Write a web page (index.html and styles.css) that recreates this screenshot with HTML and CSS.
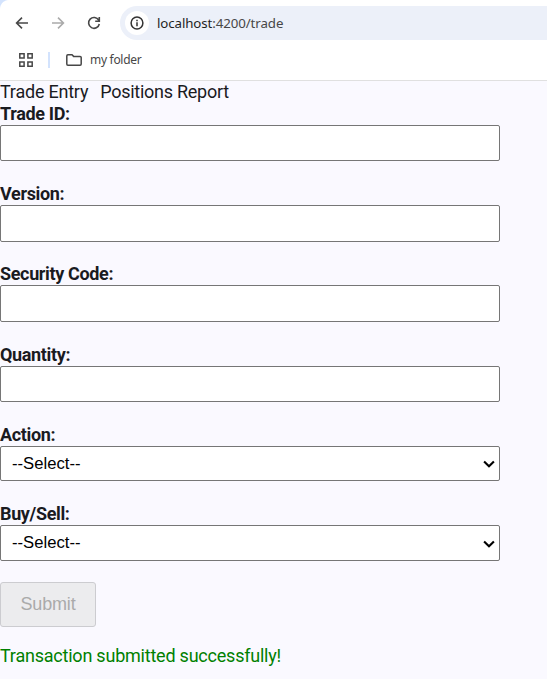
FILE: index.html
```html
<!DOCTYPE html>
<html lang="en">
<head>
<meta charset="utf-8">
<title>Trade Entry</title>
<link rel="stylesheet" href="styles.css">
</head>
<body>
<header class="browser">
  <div class="toolbar">
    <svg class="nav-icon" width="16" height="16" viewBox="0 0 16 16"><path d="M14 8H3M8 2.6L2.6 8L8 13.4"/></svg>
    <svg class="nav-icon muted" width="16" height="16" viewBox="0 0 16 16"><path d="M2 8h11M8 2.6L13.4 8L8 13.4"/></svg>
    <svg class="nav-icon" width="16" height="16" viewBox="0 0 16 16"><path d="M12.7 5.2A5.4 5.4 0 1 0 13.3 9M13.3 2v4.2H9.2"/></svg>
    <div class="address">
      <span class="info">
        <svg width="14" height="14" viewBox="0 0 14 14"><circle cx="7" cy="7" r="5.9"/><path d="M7 6.2v4M7 3.7v1.5"/></svg>
      </span>
      <span class="url"><b>localhost</b>:4200/trade</span>
    </div>
  </div>
  <div class="bookmarks">
    <svg class="apps" width="14" height="14" viewBox="0 0 14 14"><path d="M.8.8h4.3v4.3H.8zM8.9.8h4.3v4.3H8.9zM.8 8.9h4.3v4.3H.8zM8.9 8.9h4.3v4.3H8.9z"/></svg>
    <span class="divider"></span>
    <svg class="folder" width="16" height="12" viewBox="0 0 16 12"><path d="M.8 10.1V1.9Q.8.8 1.9.8H6l1.6 1.6h6.5q1.1 0 1.1 1.1v6.6q0 1.1-1.1 1.1H1.9Q.8 11.2.8 10.1z"/></svg>
    <span class="folder-name">my folder</span>
  </div>
</header>
<nav class="links"><a>Trade Entry</a><a>Positions Report</a></nav>
<form class="form">
  <div class="field"><label for="id"><span>Trade ID:</span></label><input id="id"></div>
  <div class="field tall"><label for="version"><span>Version:</span></label><input id="version"></div>
  <div class="field tall"><label for="code"><span>Security Code:</span></label><input id="code"></div>
  <div class="field"><label for="qty"><span>Quantity:</span></label><input id="qty"></div>
  <div class="field short"><label for="action"><span>Action:</span></label>
    <div class="picker"><select id="action"><option>--Select--</option></select><svg class="chevron" width="12" height="8" viewBox="0 0 12 8"><path d="M1.1 1.4L6 6.2L10.9 1.4"/></svg></div>
  </div>
  <div class="field side"><label for="side"><span>Buy/Sell:</span></label>
    <div class="picker"><select id="side"><option>--Select--</option></select><svg class="chevron" width="12" height="8" viewBox="0 0 12 8"><path d="M1.1 1.4L6 6.2L10.9 1.4"/></svg></div>
  </div>
  <button class="submit" disabled>Submit</button>
</form>
<p class="message">Transaction submitted successfully!</p>
</body>
</html>
```
FILE: styles.css
```css
* { box-sizing: border-box; }
body {
  margin: 0;
  height: 679px;
  overflow: hidden;
  background: #faf9ff;
  color: #1a1b1f;
  font: 18px/22px Roboto, sans-serif;
  letter-spacing: -.22px;
}
svg { display: block; fill: none; stroke: #474747; flex: none; }
.browser {
  height: 81px;
  padding-top: 6px;
  border-bottom: 1px solid #e0e0e0;
  background: radial-gradient(circle at 9px 9px, #fff 8.5px, #d3e3fd 9.5px) 0 0 / 9px 9px no-repeat, #fff;
  font-family: "Noto Sans", sans-serif;
}
.toolbar { display: flex; align-items: center; height: 34px; padding-left: 14px; }
.nav-icon { margin-right: 20px; stroke-width: 1.6; }
.nav-icon.muted { stroke: #aaa; }
.address {
  display: flex;
  align-items: center;
  flex: 1;
  height: 34px;
  margin-left: -2px;
  padding-left: 5px;
  border-radius: 17px 0 0 17px;
  background: #ecf0f9;
}
.info { display: grid; place-items: center; width: 24px; height: 24px; border-radius: 50%; background: #fff; }
.info svg { stroke: #333; stroke-width: 1.5; }
.url { margin-left: 8px; color: #474747; font-size: 13.3px; letter-spacing: -.1px; }
.url b { color: #1f1f1f; font-weight: 400; }
.bookmarks { display: flex; align-items: center; height: 40px; padding-left: 19px; }
.apps { stroke-width: 1.5; }
.divider { width: 2px; height: 16px; margin: 0 16px 0 15px; background: #d3e3fd; }
.folder { stroke-width: 1.5; }
.folder-name { margin-left: 8px; color: #474747; font-size: 12px; letter-spacing: -.3px; }
.links { display: flex; gap: 12px; height: 22px; }
.links a:last-child { letter-spacing: -.26px; }
.form {
  display: grid;
  grid-template-rows: 80px 80px 81px 80px 79px 79px 45px;
  width: 500px;
}
.field { display: flex; flex-direction: column; }
label { height: 22px; font-weight: 700; letter-spacing: -.35px; }
input, select {
  display: block;
  width: 100%;
  height: 36px;
  margin: 0;
  border: 1px solid #767676;
  border-radius: 2px;
  background: #fff;
  color: #000;
  font: 16.67px "Liberation Sans", sans-serif;
}
.tall input { height: 37px; }
.short select { height: 35px; }
select { padding: 0 0 0 11px; appearance: none; }
.side select { padding-bottom: 2px; }
.picker { position: relative; }
.chevron {
  position: absolute;
  right: 5px;
  top: 14px;
  stroke: #000;
  stroke-width: 2.1;
  pointer-events: none;
}
.side .chevron { top: 15px; }
.submit {
  width: 96px;
  height: 45px;
  padding: 0;
  border: 1px solid #ccccd0;
  border-radius: 3px;
  background: #ececee;
  color: #aaa;
  font: 18px "Liberation Sans", sans-serif;
  letter-spacing: -.15px;
}
.message { margin: 18px 0 0; color: #008000; }
```
